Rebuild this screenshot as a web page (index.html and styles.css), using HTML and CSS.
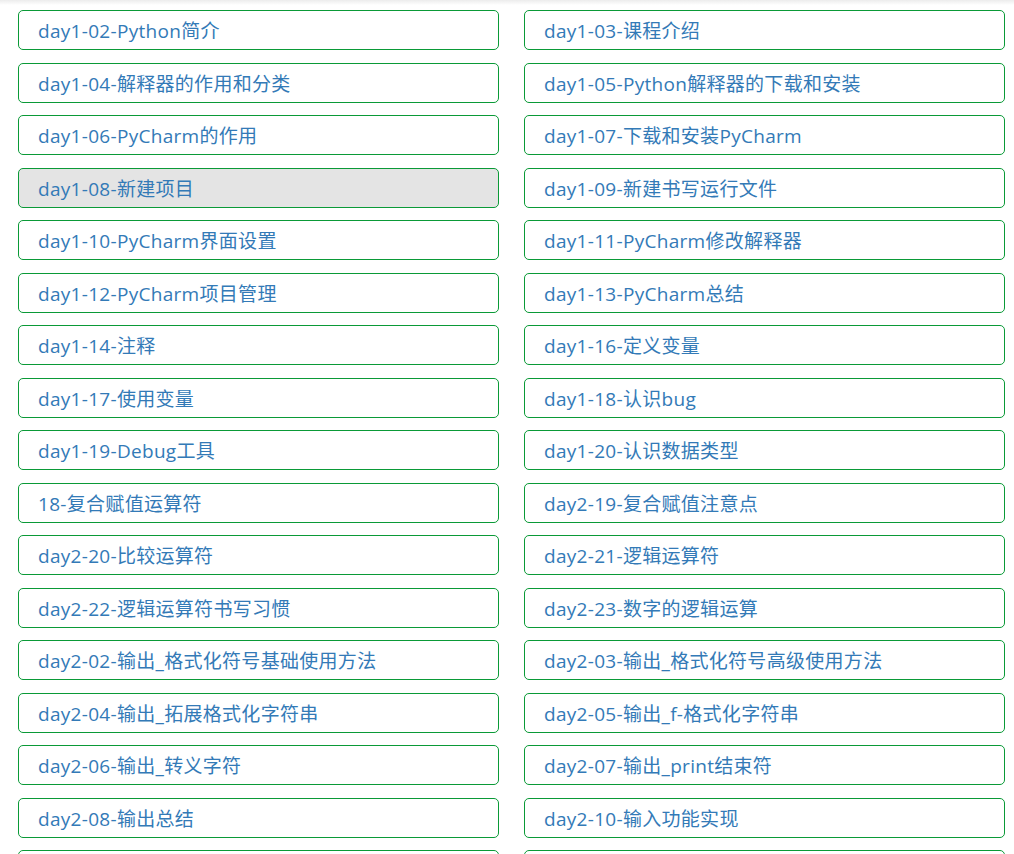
FILE: index.html
```html
<!DOCTYPE html>
<html lang="zh-CN">
<head>
<meta charset="utf-8">
<title>课程列表</title>
<link rel="stylesheet" href="styles.css">
</head>
<body>
<div class="topshade"></div>
<div class="list">
  <a class="item">day1-02-Python简介</a>
  <a class="item">day1-03-课程介绍</a>
  <a class="item">day1-04-解释器的作用和分类</a>
  <a class="item">day1-05-Python解释器的下载和安装</a>
  <a class="item">day1-06-PyCharm的作用</a>
  <a class="item">day1-07-下载和安装PyCharm</a>
  <a class="item active">day1-08-新建项目</a>
  <a class="item">day1-09-新建书写运行文件</a>
  <a class="item">day1-10-PyCharm界面设置</a>
  <a class="item">day1-11-PyCharm修改解释器</a>
  <a class="item">day1-12-PyCharm项目管理</a>
  <a class="item">day1-13-PyCharm总结</a>
  <a class="item">day1-14-注释</a>
  <a class="item">day1-16-定义变量</a>
  <a class="item">day1-17-使用变量</a>
  <a class="item">day1-18-认识bug</a>
  <a class="item">day1-19-Debug工具</a>
  <a class="item">day1-20-认识数据类型</a>
  <a class="item">18-复合赋值运算符</a>
  <a class="item">day2-19-复合赋值注意点</a>
  <a class="item">day2-20-比较运算符</a>
  <a class="item">day2-21-逻辑运算符</a>
  <a class="item">day2-22-逻辑运算符书写习惯</a>
  <a class="item">day2-23-数字的逻辑运算</a>
  <a class="item">day2-02-输出_格式化符号基础使用方法</a>
  <a class="item">day2-03-输出_格式化符号高级使用方法</a>
  <a class="item">day2-04-输出_拓展格式化字符串</a>
  <a class="item">day2-05-输出_f-格式化字符串</a>
  <a class="item">day2-06-输出_转义字符</a>
  <a class="item">day2-07-输出_print结束符</a>
  <a class="item">day2-08-输出总结</a>
  <a class="item">day2-10-输入功能实现</a>
  <a class="item"></a>
  <a class="item"></a>
</div>
</body>
</html>
```

FILE: styles.css
```css
html, body {
  margin: 0;
  padding: 0;
  background: #ffffff;
  height: 854px;
  overflow: hidden;
}
body {
  font-family: "Open Sans", "Noto Sans CJK SC", sans-serif;
  position: relative;
}
.topshade {
  position: absolute;
  left: 0;
  right: 0;
  top: 0;
  height: 5px;
  background: linear-gradient(#ececec, rgba(255,255,255,0));
}
.list {
  display: grid;
  grid-template-columns: 1fr 1fr;
  column-gap: 25.5px;
  row-gap: 12.53px;
  padding: 10px 9.5px 0 18px;
}
.item {
  box-sizing: border-box;
  height: 40px;
  display: flex;
  align-items: center;
  padding-left: 19px;
  border: 1px solid #0a9a37;
  border-radius: 5px;
  color: #337ab7;
  font-size: 19px;
  letter-spacing: 0.3px;
  white-space: nowrap;
  text-decoration: none;
  background: #ffffff;
}
.item.active {
  background: #e4e4e4;
}
```
